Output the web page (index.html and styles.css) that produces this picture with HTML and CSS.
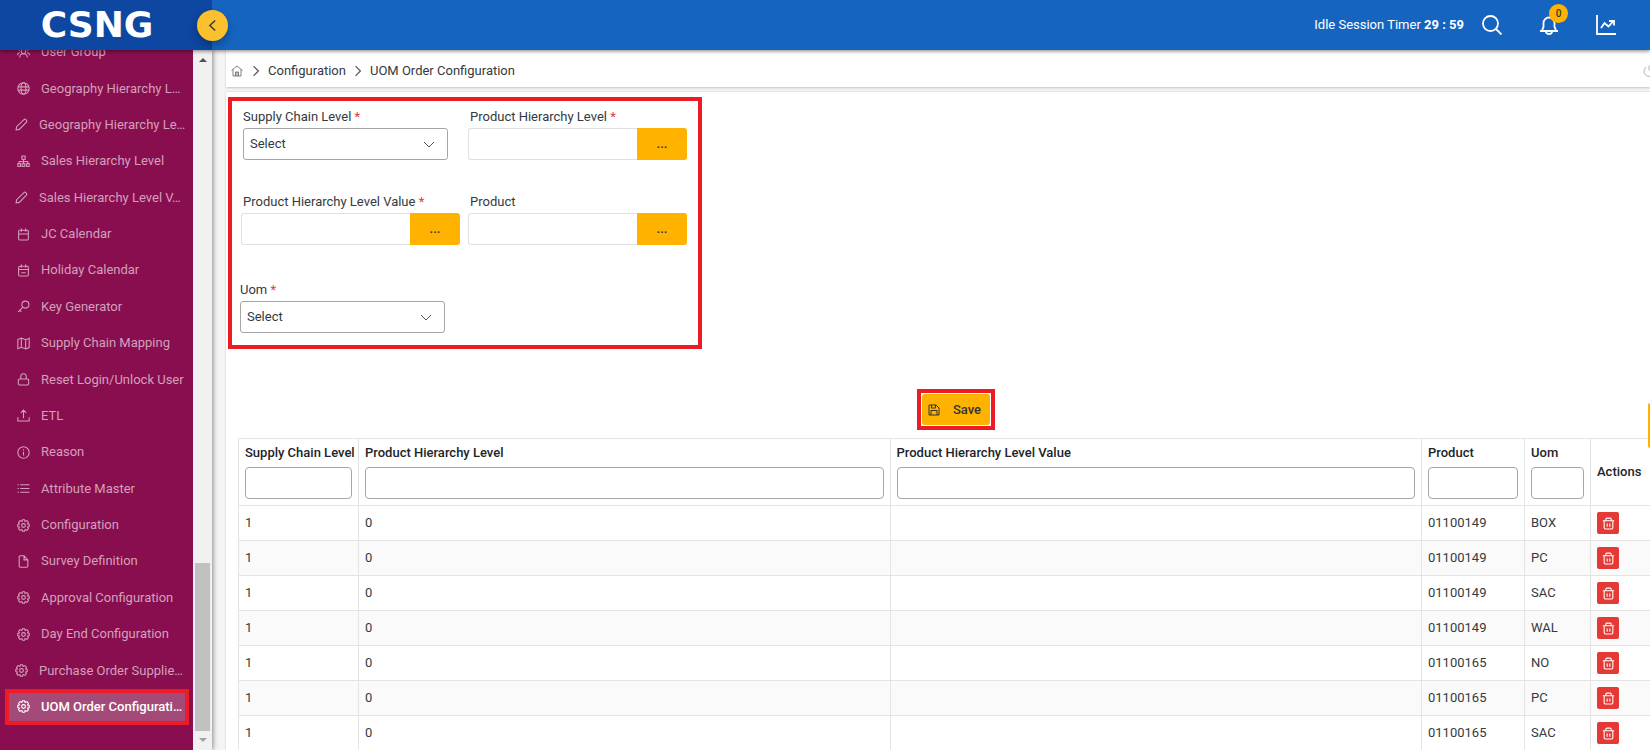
FILE: index.html
```html
<!DOCTYPE html>
<html lang="en">
<head>
<meta charset="utf-8">
<title>UOM Order Configuration</title>
<link rel="stylesheet" href="styles.css">
</head>
<body>
<svg class="sprite" aria-hidden="true">
  <symbol id="i-users" viewBox="0 0 24 24"><circle cx="12" cy="10" r="4"/><path d="M5 21a7 7 0 0 1 14 0M5 9a3.500 3.500 0 0 1 2-6M19 9a3.500 3.500 0 0 0-2-6M1 17a5 5 0 0 1 4-5M23 17a5 5 0 0 0-4-5"/></symbol>
  <symbol id="i-globe" viewBox="0 0 24 24"><circle cx="12" cy="12" r="10.500"/><ellipse cx="12" cy="12" rx="4.500" ry="10.500"/><path d="M2 9h20M2 15h20"/></symbol>
  <symbol id="i-pen" viewBox="0 0 24 24"><path d="M2 22l1-6L17 2.500c1.500-1.500 6 3 4.500 4.500L8 21z"/></symbol>
  <symbol id="i-tree" viewBox="0 0 24 24"><rect x="9" y="2" width="6" height="6"/><rect x="1.500" y="16" width="5" height="5"/><rect x="9.500" y="16" width="5" height="5"/><rect x="17.500" y="16" width="5" height="5"/><path d="M12 8v8M4 16v-4h16v4"/></symbol>
  <symbol id="i-cal" viewBox="0 0 24 24"><rect x="3" y="4" width="18" height="18" rx="2"/><path d="M3 11h18M8 1v6M16 1v6"/></symbol>
  <symbol id="i-cal2" viewBox="0 0 24 24"><rect x="3" y="4" width="18" height="18" rx="2"/><path d="M3 10h18M8 1v6M16 1v6M8 16h8"/></symbol>
  <symbol id="i-key" viewBox="0 0 24 24"><circle cx="15.500" cy="8.500" r="6.500"/><path d="M10.500 13.500L2 22M5 19l3 3"/></symbol>
  <symbol id="i-map" viewBox="0 0 24 24"><path d="M1.500 4.500L8 2l8 3 6.500-2.500v17L16 22l-8-3-6.500 2.500zM8 2v17M16 5v17"/></symbol>
  <symbol id="i-lock" viewBox="0 0 24 24"><rect x="2.500" y="11" width="19" height="11" rx="2"/><path d="M7 11V7a5 5 0 0 1 10-1v5"/></symbol>
  <symbol id="i-up" viewBox="0 0 24 24"><path d="M1.500 15v7h21v-7M12 17V2M7 7l5-5 5 5"/></symbol>
  <symbol id="i-info" viewBox="0 0 24 24"><circle cx="12" cy="12" r="10.500"/><path d="M12 10.500v7M12 6v2.500"/></symbol>
  <symbol id="i-list" viewBox="0 0 24 24"><path d="M6 5h17M6 12h17M6 19h17M1 5h2.500M1 12h2.500M1 19h2.500"/></symbol>
  <symbol id="i-gear" viewBox="0 0 24 24"><circle cx="12" cy="12" r="3.500"/><path d="M10 1.500h4l1 3 3.500-1.500 2.500 3-1.500 3 3 1v4l-3 1 1.500 3-2.500 3-3.500-1.500-1 3h-4l-1-3L5.500 21 3 18l1.500-3-3-1v-4l3-1L3 6l2.500-3L9 4.500z"/></symbol>
  <symbol id="i-file" viewBox="0 0 24 24"><path d="M13 1.500H6a2 2 0 0 0-2 2v17a2 2 0 0 0 2 2h12a2 2 0 0 0 2-2V9zM13 1.500V9h7"/></symbol>
  <symbol id="i-trash" viewBox="0 0 24 24"><path d="M1.500 7h21M4 7v13a2 2 0 0 0 2 2h12a2 2 0 0 0 2-2V7M7 7V4a2 2 0 0 1 2-2h6a2 2 0 0 1 2 2v3M9.500 12v6M14.500 12v6"/></symbol>
  <symbol id="i-right" viewBox="0 0 10 14"><path d="M2 1l6 6-6 6"/></symbol>
</svg>

<header class="topbar">
  <div class="brand">CSNG</div>
  <button class="collapse" aria-label="Collapse menu"><svg class="collapse-icon" viewBox="0 0 10 14"><path d="M8 1.500L2 7l6 5.500"/></svg></button>
  <div class="tools">
    <span class="timer">Idle Session Timer <b>29 : 59</b></span>
    <button class="tool" aria-label="Search"><svg class="tool-icon" viewBox="0 0 20 20"><circle cx="8.500" cy="8.500" r="7.500"/><path d="M14 14l5.500 5.500"/></svg></button>
    <button class="tool" aria-label="Notifications"><svg class="tool-icon" viewBox="0 0 20 20"><path d="M1 16h18M3.500 16V14l1-2V8a5.500 5.500 0 0 1 11 0v4l1 2v2M7 16.500a3 2.500 0 0 0 6 0"/></svg><span class="badge">0</span></button>
    <button class="tool" aria-label="Reports"><svg class="tool-icon" viewBox="0 0 20 20"><path d="M1 0v19h19M5 13l3.500-5 4 3.500L17 6.500M13 6h5v4.500"/></svg></button>
  </div>
</header>

<div class="page">
  <aside class="sidebar">
    <nav class="menu">
      <a class="item" href="#"><svg class="icon"><use href="#i-users"/></svg>User Group</a>
      <a class="item" href="#"><svg class="icon"><use href="#i-globe"/></svg>Geography Hierarchy L…</a>
      <a class="item wide" href="#"><svg class="icon"><use href="#i-pen"/></svg>Geography Hierarchy Le…</a>
      <a class="item" href="#"><svg class="icon"><use href="#i-tree"/></svg>Sales Hierarchy Level</a>
      <a class="item wide" href="#"><svg class="icon"><use href="#i-pen"/></svg>Sales Hierarchy Level V…</a>
      <a class="item" href="#"><svg class="icon"><use href="#i-cal"/></svg>JC Calendar</a>
      <a class="item" href="#"><svg class="icon"><use href="#i-cal2"/></svg>Holiday Calendar</a>
      <a class="item" href="#"><svg class="icon"><use href="#i-key"/></svg>Key Generator</a>
      <a class="item" href="#"><svg class="icon"><use href="#i-map"/></svg>Supply Chain Mapping</a>
      <a class="item" href="#"><svg class="icon"><use href="#i-lock"/></svg>Reset Login/Unlock User</a>
      <a class="item" href="#"><svg class="icon"><use href="#i-up"/></svg>ETL</a>
      <a class="item" href="#"><svg class="icon"><use href="#i-info"/></svg>Reason</a>
      <a class="item" href="#"><svg class="icon"><use href="#i-list"/></svg>Attribute Master</a>
      <a class="item" href="#"><svg class="icon"><use href="#i-gear"/></svg>Configuration</a>
      <a class="item" href="#"><svg class="icon"><use href="#i-file"/></svg>Survey Definition</a>
      <a class="item" href="#"><svg class="icon"><use href="#i-gear"/></svg>Approval Configuration</a>
      <a class="item" href="#"><svg class="icon"><use href="#i-gear"/></svg>Day End Configuration</a>
      <a class="item wide" href="#"><svg class="icon"><use href="#i-gear"/></svg>Purchase Order Supplie…</a>
      <a class="item active" href="#"><svg class="icon"><use href="#i-gear"/></svg>UOM Order Configurati…</a>
    </nav>
    <div class="scrollbar"><span class="arrow-up"></span><span class="thumb"></span><span class="arrow-down"></span></div>
  </aside>

  <main class="main">
    <nav class="crumbs" aria-label="Breadcrumb">
      <svg class="home" viewBox="0 0 24 24"><path d="M1 11L12 2l11 9M4 9v13h16V9M9 22v-8h6v8M12 14v8"/></svg>
      <svg class="sep"><use href="#i-right"/></svg>
      <a class="crumb" href="#">Configuration</a>
      <svg class="sep"><use href="#i-right"/></svg>
      <span>UOM Order Configuration</span>
      <svg class="power" viewBox="0 0 24 24"><path d="M7 4a10 10 0 1 0 10 0M12 1v10"/></svg>
    </nav>

    <section class="card">
      <form class="form">
        <div class="row">
          <div class="field inset">
            <label for="scl">Supply Chain Level <i class="req">*</i></label>
            <select id="scl" class="select"><option>Select</option></select>
          </div>
          <div class="field">
            <label for="phl">Product Hierarchy Level <i class="req">*</i></label>
            <div class="group"><input id="phl" class="text" type="text"><button class="pick" type="button">...</button></div>
          </div>
        </div>
        <div class="row">
          <div class="field">
            <label for="phv">Product Hierarchy Level Value <i class="req">*</i></label>
            <div class="group"><input id="phv" class="text" type="text"><button class="pick" type="button">...</button></div>
          </div>
          <div class="field">
            <label for="prd">Product</label>
            <div class="group"><input id="prd" class="text" type="text"><button class="pick" type="button">...</button></div>
          </div>
        </div>
        <div class="row last">
          <div class="field flush">
            <label for="uom">Uom <i class="req">*</i></label>
            <select id="uom" class="select"><option>Select</option></select>
          </div>
        </div>
      </form>

      <div class="actions">
        <div class="marker"><button class="save" type="button"><svg class="save-icon" viewBox="0 0 24 24"><path d="M2 2h14l6 6v14H2zM7 2v6h8V2M6 22v-9h12v9"/></svg>Save</button></div>
      </div>

      <table class="grid">
        <colgroup><col class="c-level"><col><col><col class="c-product"><col class="c-uom"><col class="c-actions"></colgroup>
        <thead>
          <tr>
            <th><label for="f1">Supply Chain Level</label><input id="f1" class="filter" type="text"></th>
            <th><label for="f2">Product Hierarchy Level</label><input id="f2" class="filter" type="text"></th>
            <th><label for="f3">Product Hierarchy Level Value</label><input id="f3" class="filter" type="text"></th>
            <th><label for="f4">Product</label><input id="f4" class="filter" type="text"></th>
            <th><label for="f5">Uom</label><input id="f5" class="filter" type="text"></th>
            <th>Actions</th>
          </tr>
        </thead>
        <tbody>
          <tr><td>1</td><td>0</td><td></td><td>01100149</td><td>BOX</td><td><button class="del" aria-label="Delete"><svg class="del-icon"><use href="#i-trash"/></svg></button></td></tr>
          <tr><td>1</td><td>0</td><td></td><td>01100149</td><td>PC</td><td><button class="del" aria-label="Delete"><svg class="del-icon"><use href="#i-trash"/></svg></button></td></tr>
          <tr><td>1</td><td>0</td><td></td><td>01100149</td><td>SAC</td><td><button class="del" aria-label="Delete"><svg class="del-icon"><use href="#i-trash"/></svg></button></td></tr>
          <tr><td>1</td><td>0</td><td></td><td>01100149</td><td>WAL</td><td><button class="del" aria-label="Delete"><svg class="del-icon"><use href="#i-trash"/></svg></button></td></tr>
          <tr><td>1</td><td>0</td><td></td><td>01100165</td><td>NO</td><td><button class="del" aria-label="Delete"><svg class="del-icon"><use href="#i-trash"/></svg></button></td></tr>
          <tr><td>1</td><td>0</td><td></td><td>01100165</td><td>PC</td><td><button class="del" aria-label="Delete"><svg class="del-icon"><use href="#i-trash"/></svg></button></td></tr>
          <tr><td>1</td><td>0</td><td></td><td>01100165</td><td>SAC</td><td><button class="del" aria-label="Delete"><svg class="del-icon"><use href="#i-trash"/></svg></button></td></tr>
        </tbody>
      </table>
    </section>
  </main>
</div>
<div class="side-tab"></div>
</body>
</html>
```

FILE: styles.css
```css
* { box-sizing: border-box; }

body {
  margin: 0;
  height: 100vh;
  display: flex;
  flex-direction: column;
  overflow: hidden;
  font: 13px/16px Roboto, "Liberation Sans", sans-serif;
  color: #343a40;
  background: #f5f5f5;
}

button, input, select { font: inherit; color: inherit; margin: 0; }
button { border: 0; padding: 0; cursor: pointer; }
a { color: inherit; text-decoration: none; }
svg { fill: none; stroke: currentColor; stroke-width: 2; flex: none; }
.sprite { position: absolute; width: 0; height: 0; }

/* Top bar */
.topbar {
  position: relative;
  z-index: 2;
  flex: none;
  display: flex;
  height: 50px;
  color: #fff;
  background: #1565c0;
  box-shadow: 0 1px 4px rgba(0, 0, 0, 0.5);
}
.brand {
  width: 212px;
  padding-right: 18px;
  background: #0d47a1;
  text-align: center;
  font: bold 36px/50px "DejaVu Sans", sans-serif;
}
.collapse {
  position: absolute;
  left: 197px;
  top: 10px;
  width: 31px;
  height: 31px;
  display: grid;
  place-items: center;
  border-radius: 50%;
  color: #333;
  background: #fbc02d;
  box-shadow: 0 4px 8px rgba(0, 0, 0, 0.3);
}
.collapse-icon { width: 9px; height: 13px; stroke-width: 1.5; }
.tools {
  margin-left: auto;
  display: flex;
  align-items: center;
  padding-right: 34px;
}
.timer { margin-right: 18px; }
.tool {
  position: relative;
  display: flex;
  margin-right: 37px;
  color: #fff;
  background: none;
}
.tool:last-child { margin-right: 0; }
.tool-icon { width: 20px; height: 20px; stroke-width: 1.8; }
.badge {
  position: absolute;
  left: 10px;
  top: -11px;
  width: 19px;
  height: 19px;
  border-radius: 50%;
  font: 500 10px/19px Roboto, sans-serif;
  color: #333;
  background: #ffb300;
}

/* Sidebar */
.page { flex: 1; min-height: 0; display: flex; }
.sidebar {
  z-index: 1;
  flex: none;
  display: flex;
  width: 212px;
  background: #880e4f;
  box-shadow: 0 0 6px rgba(0, 0, 0, 0.6);
}
.menu {
  flex: 1;
  display: flex;
  flex-direction: column;
  margin: -16px 0 25px;
}
.item {
  flex: 1;
  display: flex;
  align-items: center;
  gap: 11px;
  margin: 0 4px 0 5px;
  padding-left: 12px;
  white-space: nowrap;
  color: #d3a0bb;
}
.item.wide { padding-left: 10px; }
.item.active {
  box-shadow: inset 0 0 0 4px #ed1c24;
  font-weight: 500;
  color: #fff;
  background: #a44a78;
}
.icon { width: 13px; height: 13px; }
.scrollbar {
  flex: none;
  display: flex;
  flex-direction: column;
  align-items: center;
  width: 19px;
  padding: 8px 0;
  background: #f1f1f1;
}
.arrow-up, .arrow-down { border: 4px solid transparent; }
.arrow-up { border-top: 0; border-bottom-color: #505050; }
.arrow-down { border-bottom: 0; border-top-color: #a3a3a3; }
.thumb { width: 15px; height: 168px; margin: auto 0 7px; background: #c1c1c1; }

/* Main */
.main {
  flex: 1;
  min-width: 0;
  display: flex;
  flex-direction: column;
  gap: 5px;
  padding-left: 14px;
}
.crumbs {
  flex: none;
  display: flex;
  align-items: center;
  height: 37px;
  padding: 4px 0 0 5px;
  background: #fff;
  box-shadow: 0 1px 2px rgba(0, 0, 0, 0.2);
}
.home { width: 12px; height: 12px; margin-right: 9px; stroke-width: 1.5; color: #555; }
.sep { width: 8px; height: 12px; margin-right: 8px; stroke-width: 1.5; color: #555; }
.crumb { margin-right: 8px; }
.power { width: 12px; height: 12px; margin: 0 -5px 0 auto; stroke-width: 1.5; color: #999; }
.card {
  flex: 1;
  width: calc(100% + 38px);
  padding: 5px 14px 0 12px;
  background: #fff;
  box-shadow: 0 0 2px rgba(0, 0, 0, 0.2);
}

/* Form */
.form {
  width: 474px;
  margin: 0 0 40px -10px;
  padding: 8px 8px 12px;
  border: 4px solid #ed1c24;
}
.row { display: flex; gap: 8px; margin-bottom: 34px; padding-left: 1px; }
.row:nth-child(2) { margin-bottom: 37px; }
.row.last { margin-bottom: 0; padding-left: 0; }
.field { display: flex; flex-direction: column; gap: 3px; width: 219px; }
.field label { padding-left: 2px; }
.field.inset .select { margin-left: 2px; }
.field.flush label { padding-left: 0; }
.req { font-style: normal; color: #e53935; }
.select {
  width: 205px;
  height: 32px;
  padding: 0 6px;
  border: 1px solid #a6a6a6;
  border-radius: 3px;
  appearance: none;
  background: #fff url("data:image/svg+xml,%3Csvg xmlns='http://www.w3.org/2000/svg' viewBox='0 0 12 7' fill='none' stroke='%23555'%3E%3Cpath d='M1 1l5 5 5-5'/%3E%3C/svg%3E") no-repeat right 12px center / 12px 7px;
}
.group { display: flex; height: 32px; }
.text {
  flex: 1;
  min-width: 0;
  border: 1px solid #e0e0e0;
  border-right: 0;
  border-radius: 3px 0 0 3px;
}
.pick { width: 50px; border-radius: 0 3px 3px 0; font-weight: 500; color: #333; background: #ffb300; }

/* Save */
.actions { display: flex; justify-content: center; margin-bottom: 8px; }
.marker { border: 4px solid #ed1c24; padding: 1px; }
.save {
  display: flex;
  align-items: center;
  gap: 13px;
  height: 31px;
  padding: 0 9px 0 6px;
  border-radius: 3px;
  font-weight: 500;
  color: #333;
  background: #ffb300;
}
.save-icon { width: 12px; height: 12px; }

/* Table */
.grid { width: 100%; table-layout: fixed; border-collapse: collapse; }
.c-level { width: 120px; }
.c-product { width: 103px; }
.c-uom { width: 66px; }
.c-actions { width: 83px; }
.grid th, .grid td { padding: 0 6px; border: 1px solid #e4e4e4; text-align: left; }
.grid th { height: 67px; font-weight: 500; color: #212529; }
.grid th label { display: block; margin-bottom: 6px; white-space: nowrap; }
.grid td { height: 35px; }
.grid tbody tr:nth-child(even) { background: #fafafa; }
.filter {
  display: block;
  width: 100%;
  height: 32px;
  border: 1px solid #a6a6a6;
  border-radius: 4px;
}
.del {
  display: grid;
  place-items: center;
  width: 22px;
  height: 22px;
  border-radius: 2px;
  color: #fff;
  background: #e53935;
}
.del-icon { width: 13px; height: 13px; }

.side-tab {
  position: absolute;
  z-index: 3;
  right: 0;
  top: 403px;
  width: 2px;
  height: 45px;
  border-radius: 2px 0 0 2px;
  background: #ffb300;
}
```
